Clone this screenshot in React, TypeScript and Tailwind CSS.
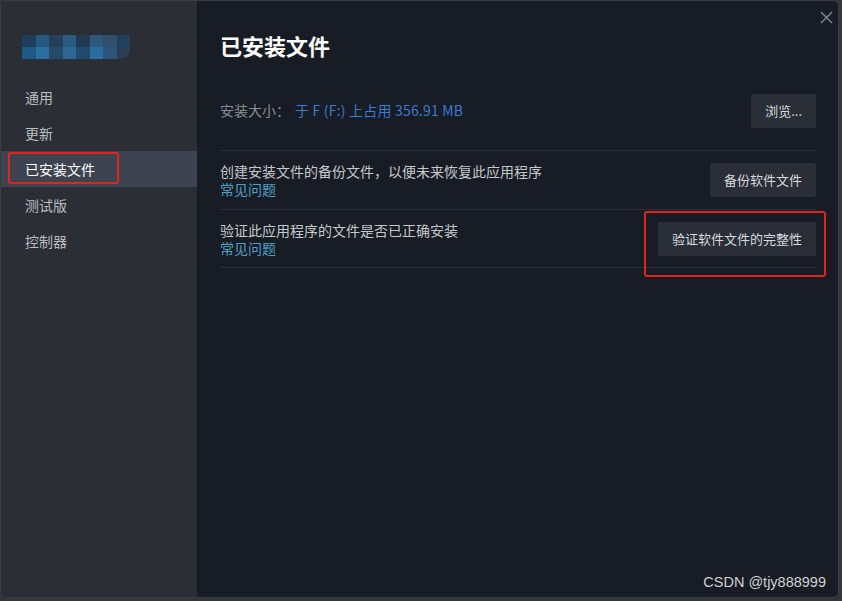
import type React from 'react'

const menu = ['通用', '更新', '已安装文件', '测试版', '控制器']

const logoCells = [
  ['#1d3f5c', '#255a80', '#24405a', '#2a5c82', '#1e3a55', '#2b5a7e', '#2f4f6c', '#20405e'],
  ['#1f5a86', '#2a6fa0', '#244a68', '#2c6795', '#224a6b', '#2a6ea0', '#2e5578', '#2a3f55'],
]

const Logo: React.FC = () => (
  <div className="ml-[21px] mt-[34px] flex h-[24px] w-[108px] flex-col overflow-hidden rounded-br-[10px]">
    {logoCells.map((row, i) => (
      <div key={i} className="flex h-[12px]">
        {row.map((c, j) => (
          <div key={j} className="h-full flex-1" style={{ backgroundColor: c }} />
        ))}
      </div>
    ))}
  </div>
)

const Button: React.FC<{ children: React.ReactNode; className?: string }> = ({
  children,
  className = '',
}) => (
  <button
    type="button"
    className={`h-[34px] rounded-[2px] bg-[#2a2e36] px-[14px] text-[13px] text-[#d6dadd] ${className}`}
  >
    {children}
  </button>
)

export default function App() {
  return (
    <div
      className="h-[601px] w-[842px] bg-[#34373a]"
      style={{ fontFamily: '"Noto Sans CJK SC", "Noto Sans", sans-serif' }}
    >
      <div className="relative flex h-[598px] w-[839px] overflow-hidden rounded-[6px] border border-[#3a3d43] bg-[#181c24]">
        {/* sidebar */}
        <aside className="flex w-[196px] shrink-0 flex-col bg-[#2b2e34]">
          <Logo />
          <nav className="mt-[20px] flex flex-col">
            {menu.map((item) => {
              const active = item === '已安装文件'
              return (
                <div
                  key={item}
                  className={`relative flex h-[36px] items-center pl-[24px] text-[14px] ${
                    active ? 'bg-[#3d4350] text-white' : 'text-[#b9bdc1]'
                  }`}
                >
                  {item}
                  {active && (
                    <div className="absolute left-[7px] top-[1px] h-[32px] w-[111px] rounded-[3px] border-[2px] border-[#e3241c]" />
                  )}
                </div>
              )
            })}
          </nav>
        </aside>

        {/* content */}
        <main className="flex-1 pl-[23px] pr-[22px] pt-[29px]">
          <h1 className="text-[22px] font-bold leading-[30px] text-white">已安装文件</h1>

          <div className="mt-[34px] flex h-[33px] items-center justify-between">
            <div className="flex items-center text-[14px]">
              <span className="text-[#878d94]">安装大小：</span>
              <span className="ml-[5px] tracking-[0.2px] text-[#3c7bd3]">于 F (F:) 上占用 356.91 MB</span>
            </div>
            <Button className="h-[33px]">浏览...</Button>
          </div>

          <div className="mt-[23px] border-b border-[#2b3038]" />

          <div className="flex h-[59px] items-center justify-between border-b border-[#2b3038]">
            <div className="text-[14px] leading-[18px]">
              <div className="text-[#c5c9cc]">创建安装文件的备份文件，以便未来恢复此应用程序</div>
              <div className="text-[#4fa0c8]">常见问题</div>
            </div>
            <Button>备份软件文件</Button>
          </div>

          <div className="flex h-[58px] items-center justify-between border-b border-[#2b3038]">
            <div className="text-[14px] leading-[18px]">
              <div className="text-[#c5c9cc]">验证此应用程序的文件是否已正确安装</div>
              <div className="text-[#4fa0c8]">常见问题</div>
            </div>
            <div className="relative">
              <Button>验证软件文件的完整性</Button>
              <div className="absolute -bottom-[21px] -left-[14px] -right-[10px] -top-[11px] rounded-[3px] border-[2px] border-[#e3241c]" />
            </div>
          </div>
        </main>

        {/* close */}
        <svg
          className="absolute left-[819px] top-[10px]"
          width="13"
          height="13"
          viewBox="0 0 13 13"
          fill="none"
          stroke="#7f8a93"
          strokeWidth="1.4"
        >
          <path d="M1 1L12 12M12 1L1 12" />
        </svg>

        <div
          className="absolute bottom-[3px] right-[12px] text-[14.5px] text-[#cfd2d4]"
          style={{ fontFamily: '"Liberation Sans", Arial, sans-serif' }}
        >
          CSDN @tjy888999
        </div>
      </div>
    </div>
  )
}
